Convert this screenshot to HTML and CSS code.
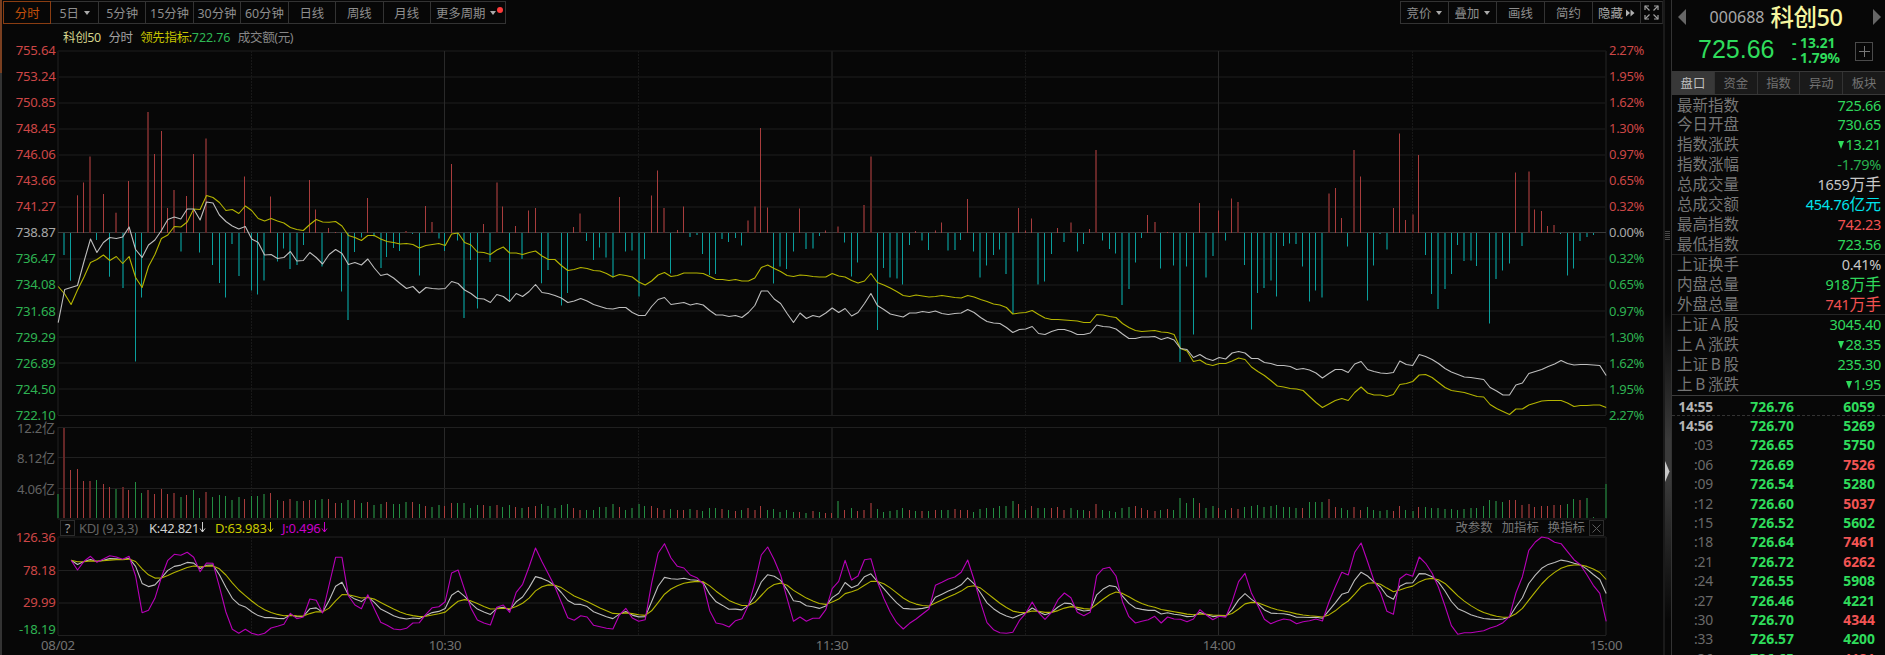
FILE: index.html
```html
<!DOCTYPE html>
<html lang="zh-CN">
<head>
  <meta charset="UTF-8" />
  <title>科创50 分时</title>
  <link rel="stylesheet" href="styles.css">
</head>
<body>
  <div id="wrapper">
    <div class="edge"></div>

    <div id="chart">
      <div class="toolbar">
        <div class="periods">
          <button class="active">分时</button>
          <button>5日<i class="caret"></i></button>
          <button>5分钟</button>
          <button>15分钟</button>
          <button>30分钟</button>
          <button>60分钟</button>
          <button>日线</button>
          <button>周线</button>
          <button>月线</button>
          <button class="more">更多周期<i class="caret"></i><i class="dot"></i></button>
        </div>
        <div class="tools">
          <button>竞价<i class="caret"></i></button>
          <button>叠加<i class="caret"></i></button>
          <button>画线</button>
          <button>简约</button>
          <button class="hide">隐藏<svg width="9" height="8" viewBox="0 0 9 8"><path d="M0 0.5L4 4L0 7.5ZM4.5 0.5L8.5 4L4.5 7.5Z"/></svg></button>
          <button class="full"><svg width="15" height="15" viewBox="0 0 15 15"><path d="M1 5V1H5M10 1H14V5M14 10V14H10M5 14H1V10" /><path d="M1 1L5.5 5.5M14 1L9.5 5.5M14 14L9.5 9.5M1 14L5.5 9.5" /></svg></button>
        </div>
      </div>

      <div class="legend">
        <span class="name">科创50</span>
        <span class="mode">分时</span>
        <span class="lead">领先指标:<b>722.76</b></span>
        <span class="amount">成交额(元)</span>
      </div>

      <svg id="price" width="1661" height="377" viewBox="2 44 1661 377"></svg>
      <svg id="volume" width="1661" height="98" viewBox="2 421 1661 98"></svg>

      <div class="kdj-bar">
        <span class="box">?</span>
        <span class="kdj-name">KDJ (9,3,3)</span>
        <span class="k">K:42.821<svg class="arrow" width="7" height="11" viewBox="0 0 7 11"><path d="M3.5 0V10M1 6.5L3.5 10L6 6.5"/></svg></span>
        <span class="d">D:63.983<svg class="arrow" width="7" height="11" viewBox="0 0 7 11"><path d="M3.5 0V10M1 6.5L3.5 10L6 6.5"/></svg></span>
        <span class="j">J:0.496<svg class="arrow" width="7" height="11" viewBox="0 0 7 11"><path d="M3.5 0V10M1 6.5L3.5 10L6 6.5"/></svg></span>
        <div class="kdj-links">
          <span>改参数</span>
          <span>加指标</span>
          <span>换指标</span>
          <span class="box"><svg width="9" height="9" viewBox="0 0 9 9"><path d="M0.5 0.5L8.5 8.5M8.5 0.5L0.5 8.5"/></svg></span>
        </div>
      </div>

      <svg id="kdj" width="1661" height="118" viewBox="2 537 1661 118"></svg>
    </div>

    <div id="splitter">
      <div class="grip"></div>
      <svg class="handle" width="5" height="21" viewBox="0 0 5 21"><path d="M0 0L4.5 10.5L0 21Z"/></svg>
    </div>

    <div id="side">
      <div class="quote">
        <div class="title">
          <svg width="8" height="16" viewBox="0 0 8 16"><path d="M8 0V16L0 8Z"/></svg>
          <div><span class="code">000688</span><span class="stock">科创50</span></div>
          <svg width="8" height="16" viewBox="0 0 8 16"><path d="M0 0V16L8 8Z"/></svg>
        </div>
        <div class="now">
          <span class="last">725.66</span>
          <div class="change"><span>- 13.21</span><span>- 1.79%</span></div>
          <span class="add"><svg width="11" height="11" viewBox="0 0 11 11"><path d="M5.5 0V11M0 5.5H11"/></svg></span>
        </div>
      </div>

      <div class="tabs">
        <span class="active">盘口</span>
        <span>资金</span>
        <span>指数</span>
        <span>异动</span>
        <span>板块</span>
      </div>

      <div class="info">
        <div class="row"><span>最新指数</span><b class="green">725.66</b></div>
        <div class="row"><span>今日开盘</span><b class="green">730.65</b></div>
        <div class="row"><span>指数涨跌</span><b class="green"><i class="down"></i>13.21</b></div>
        <div class="row"><span>指数涨幅</span><b class="green dark">-1.79%</b></div>
        <div class="row"><span>总成交量</span><b class="white">1659<em>万手</em></b></div>
        <div class="row"><span>总成交额</span><b class="cyan">454.76<em>亿元</em></b></div>
        <div class="row"><span>最高指数</span><b class="red">742.23</b></div>
        <div class="row line"><span>最低指数</span><b class="green">723.56</b></div>
        <div class="row"><span>上证换手</span><b class="white">0.41%</b></div>
        <div class="row"><span>内盘总量</span><b class="green">918<em>万手</em></b></div>
        <div class="row line"><span>外盘总量</span><b class="red">741<em>万手</em></b></div>
        <div class="row"><span>上证<u>A</u>股</span><b class="green">3045.40</b></div>
        <div class="row"><span>上<u>A</u>涨跌</span><b class="green"><i class="down"></i>28.35</b></div>
        <div class="row"><span>上证<u>B</u>股</span><b class="green">235.30</b></div>
        <div class="row"><span>上<u>B</u>涨跌</span><b class="green"><i class="down"></i>1.95</b></div>
      </div>

      <div class="ticks">
        <div class="tick minute dashed"><span>14:55</span><b>726.76</b><b>6059</b></div>
        <div class="tick minute"><span>14:56</span><b>726.70</b><b>5269</b></div>
        <div class="tick"><span>:03</span><b>726.65</b><b>5750</b></div>
        <div class="tick"><span>:06</span><b>726.69</b><b class="red">7526</b></div>
        <div class="tick"><span>:09</span><b>726.54</b><b>5280</b></div>
        <div class="tick"><span>:12</span><b>726.60</b><b class="red">5037</b></div>
        <div class="tick"><span>:15</span><b>726.52</b><b>5602</b></div>
        <div class="tick"><span>:18</span><b>726.64</b><b class="red">7461</b></div>
        <div class="tick"><span>:21</span><b>726.72</b><b class="red">6262</b></div>
        <div class="tick"><span>:24</span><b>726.55</b><b>5908</b></div>
        <div class="tick"><span>:27</span><b>726.46</b><b>4221</b></div>
        <div class="tick"><span>:30</span><b>726.70</b><b class="red">4344</b></div>
        <div class="tick"><span>:33</span><b>726.57</b><b>4200</b></div>
        <div class="tick"><span>:36</span><b>726.65</b><b class="red">4181</b></div>
      </div>
    </div>
  </div>

  <script src="chart.js"></script>
</body>
</html>
```

FILE: styles.css
```css
html, body {
  margin: 0;
  padding: 0;
  height: 100%;
  background: #070707;
  color: #8a8a8a;
  font-family: 'Noto Sans', 'Noto Sans CJK SC', sans-serif;
  font-size: 12.5px;
  overflow: hidden;
}

b, i, em, u {
  font-weight: normal;
  font-style: normal;
  text-decoration: none;
}

#wrapper {
  display: flex;
  height: 100vh;
}

.edge {
  width: 2px;
  flex-shrink: 0;
  background: linear-gradient(#7a3f20 73px, #333 73px);
}

#chart {
  width: 1661px;
  flex-shrink: 0;
  display: flex;
  flex-direction: column;
}

#chart > svg {
  display: block;
  flex-shrink: 0;
  overflow: visible;
}

/* toolbar */

.toolbar {
  height: 25px;
  box-sizing: border-box;
  padding: 1px 0 0 1px;
  display: flex;
  justify-content: space-between;
}

.periods, .tools {
  display: flex;
}

.toolbar button {
  width: 48.45px;
  height: 23px;
  margin: 0 -1px 0 0;
  padding: 0;
  box-sizing: border-box;
  display: flex;
  align-items: center;
  justify-content: center;
  border: 1px solid #333;
  background: none;
  color: #8e8e8e;
  font-family: inherit;
  font-size: 12.4px;
  white-space: nowrap;
}

.periods button.active {
  color: #c4500a;
  border-color: #8a3d12;
  position: relative;
}

.periods button.more {
  width: 76.5px;
  position: relative;
  padding-right: 4px;
}

.tools button {
  width: 49px;
}

.tools button.hide {
  color: #a8a8a8;
}

.tools button.full {
  width: 23px;
  margin-right: 0;
  border-right-color: #222;
}

.hide svg {
  margin-left: 3px;
  fill: #b0b0b0;
}

.full svg {
  fill: none;
  stroke: #a0a0a0;
  stroke-width: 1.2;
}

.caret {
  margin-left: 5px;
  border: 3px solid transparent;
  border-top: 4px solid #aaa;
  border-bottom: 0;
}

.dot {
  position: absolute;
  top: 5px;
  right: 2px;
  width: 6px;
  height: 6px;
  border-radius: 50%;
  background: #ff3b3b;
}

.legend {
  height: 19px;
  padding: 6px 0 0 61px;
  box-sizing: border-box;
  display: flex;
  align-items: center;
  gap: 7.5px;
  line-height: 18px;
  font-size: 12.5px;
  letter-spacing: -0.35px;
}

.name { color: #d4d48c; }
.mode { color: #a0a0a0; }
.lead { color: #c4c400; }
.lead b { color: #2eb854; letter-spacing: -0.1px; }
.amount { color: #868686; }

/* chart drawing */

#chart text {
  font-size: 13.2px;
  letter-spacing: -0.25px;
}

#chart .pct {
  font-size: 13px;
  letter-spacing: -0.3px;
}

.t-red { fill: #cc4646; }
.t-green { fill: #2eb252; }
.t-white { fill: #a8a8a8; }
.t-gray { fill: #626262; }
.t-time { fill: #727272; }

.up { fill: #a83c3c; }
.up.soft { fill: #642626; }
.down-bar { fill: #0a9e9c; }
.down-bar.soft { fill: #07605f; }
.vol-down { fill: #238c42; }
.vol-down.soft { fill: #1a562a; }

.curve {
  fill: none;
  stroke-width: 1.1;
  stroke-linejoin: round;
}

.c-white { stroke: #bebebe; }
.c-yellow { stroke: #b4b400; }
.c-purple { stroke: #b800b8; }

/* kdj header */

.kdj-bar {
  height: 18px;
  box-sizing: border-box;
  padding: 0 59px 0 58px;
  display: flex;
  align-items: center;
  line-height: 18px;
  font-size: 13px;
  letter-spacing: -0.25px;
}

.box {
  width: 15px;
  height: 16px;
  box-sizing: border-box;
  display: flex;
  align-items: center;
  justify-content: center;
  border: 1px solid #2c2c2c;
  color: #9a9a9a;
}

.kdj-bar svg {
  fill: none;
  stroke: currentColor;
  stroke-width: 1;
}

.kdj-name { margin-left: 4px; color: #626262; width: 70px; }
.k { color: #d0d0d0; width: 66px; }
.d { color: #c8c800; width: 67px; }
.j { color: #c800c8; }

.kdj-links {
  margin-left: auto;
  display: flex;
  align-items: center;
  color: #767676;
  font-size: 12.4px;
  gap: 9px;
  letter-spacing: 0;
}

.kdj-links .box {
  margin-left: -5px;
  color: #5a5a5a;
}

/* splitter */

#splitter {
  width: 8px;
  flex-shrink: 0;
  box-sizing: border-box;
  position: relative;
  border-left: 2px solid #1a1a1a;
  background: linear-gradient(#070707 310px, #3a3a3a 440px, #3a3a3a 480px, #070707 620px);
}

.grip {
  position: absolute;
  top: 231px;
  left: 0;
  width: 5px;
  height: 9px;
  background: repeating-linear-gradient(#484848 0 1px, #070707 1px 2px);
}

.handle {
  position: absolute;
  top: 461px;
  left: 0;
  fill: #c8c8c8;
}

/* right side panel */

#side {
  flex: 1;
  min-width: 0;
  border-left: 1px solid #333;
}

.quote {
  height: 71px;
}

.title {
  height: 34px;
  padding: 0 4px 0 6px;
  display: flex;
  align-items: center;
  justify-content: space-between;
  fill: #666;
}

.title div {
  display: flex;
  align-items: center;
  padding-right: 7px;
}

.code {
  color: #a8a8a8;
  font-size: 16px;
}

.stock {
  margin-left: 6px;
  color: #f6f6a0;
  font-size: 23.5px;
  font-weight: 500;
  line-height: 34px;
  letter-spacing: -0.5px;
}

.now {
  display: flex;
  align-items: center;
  height: 31px;
  padding-left: 26px;
  color: #2fdc5c;
}

.last {
  width: 94px;
  font: 25px/31px 'Liberation Sans', sans-serif;
  white-space: nowrap;
}

.change {
  display: flex;
  flex-direction: column;
  width: 63px;
  font-size: 13.8px;
  font-weight: bold;
  line-height: 15px;
  white-space: pre;
}

.add {
  width: 18px;
  height: 19px;
  margin-top: 4px;
  box-sizing: border-box;
  border: 1px solid #4a4a4a;
  display: flex;
  align-items: center;
  justify-content: center;
}

.add svg {
  stroke: #777;
  stroke-width: 1;
}

.tabs {
  display: flex;
  height: 24px;
  box-sizing: border-box;
  border-top: 1px solid #383838;
  border-bottom: 1px solid #383838;
  background: #1a1a1a;
}

.tabs span {
  flex: 1;
  line-height: 23px;
  text-align: center;
  font-size: 12.3px;
  color: #727272;
  border-left: 1px solid #333;
}

.tabs .active {
  background: #383838;
  color: #c0c0c0;
  border-left: 0;
}

.info {
  border-bottom: 1px solid #3c3c3c;
  padding-top: 0.5px;
}

.row {
  height: 19.98px;
  box-sizing: border-box;
  padding: 0 4px 0 5px;
  display: flex;
  justify-content: space-between;
  line-height: 19px;
}

.row.line {
  border-bottom: 1px solid #262626;
}

.row span {
  font-size: 15.5px;
  color: #767676;
}

.row u {
  display: inline-block;
  width: 15.5px;
  text-align: center;
}

.row b {
  font-size: 14.5px;
  line-height: 18px;
  letter-spacing: -0.3px;
}

.row em {
  font-size: 15.8px;
  letter-spacing: 0;
}

.down {
  display: inline-block;
  margin-right: 1px;
  vertical-align: 1px;
  border: 3.5px solid transparent;
  border-top: 8px solid #2fdc5c;
  border-bottom: 0;
}

.green { color: #2fd85c; }
.green.dark { color: #28b04e; }
.white { color: #c8c8c8; }
.cyan { color: #00e4ec; }
.red { color: #f25252; }

.ticks {
  padding-top: 0.5px;
}

.tick {
  height: 19.42px;
  box-sizing: border-box;
  display: flex;
  line-height: 19px;
  font-size: 13.9px;
  padding: 0 10px 0 5px;
}

.tick.dashed {
  border-bottom: 1px dashed #333;
}

.tick span {
  width: 36px;
  text-align: right;
  color: #6a6a6a;
  letter-spacing: -0.2px;
}

.tick.minute span {
  color: #b4b4b4;
  font-weight: bold;
}

.tick b {
  width: 81px;
  text-align: right;
  font-weight: bold;
  color: #2fdc5c;
}

.tick b:last-child {
  margin-left: auto;
}

.tick b.red {
  color: #f25454;
}
```

FILE: chart.js
```js
const LEFT = 58, RIGHT = 1606, STEP = 1548 / 240;
const ZERO = 233;

// end of each lead-indicator bar, one per minute
const lead = [
  233,255,280.7,195.3,182.5,156.5,240,194,276.7,212.7,288,181,361.5,297.5,112,154,131,208,190,251.5,
  196,154,252.5,138.5,265,283,297.5,244,276,176.5,290.5,294.5,280.5,196.5,261.5,248.5,269,265,245,180,
  209.5,266.5,228,232,291.5,320,252,237.5,198,236.5,268,257,248,251,231,234,275.5,206,222,238.5,
  251,164,240.5,318,260,308.5,224,262,182.5,206.5,301,226,259,210.5,208,283.3,270,233,305.5,293,
  227,213.5,241,260,247.5,257.5,277.5,197,251.5,250.5,296.5,259,195.5,170.5,208,273.5,230,206.5,237,235,
  254,275,274,239,242,238,245.5,220.5,206.5,128,207.5,283.5,266.5,269,251.5,208.5,249,248.5,236,230.5,
  233,226.5,242.5,276.5,262.5,205,156.5,330,268,277.5,278.5,284.5,245,231,240.5,250,230.5,222.5,250.5,250,
  240,199,251.5,277.5,265.5,255,249.5,274,314,208,230.5,218.5,284.5,281.5,254,228,242,222.5,251.5,244,
  229,150,240.5,249,253.5,305,289,262.5,238,215,222,268.5,232,265.5,362,266.5,334.5,203,277.5,256,
  210.5,240.5,198.5,202,265,329.5,293,288,280.5,296.5,246,243.5,244,266.5,301.5,290.5,297.5,193.5,188,218,
  246.5,150,176.5,300.5,265.5,234,249.5,208,133.5,220,214.5,155,255,294,309,289,274,245,261,260.5,
  266,233,323.5,279,270.5,263.5,172.5,246,171.5,209.5,211,226,225,234,275.5,268.5,241,237,235,233
];

const price = [
  322.7,289.5,287.5,285.5,261.5,239,252.5,242.5,237.5,238.5,237,227,249.5,257.5,245,240,230.5,219.5,217,219,
  209,209,220,202,203,215,221.5,226,229,226.5,239,242.5,255,254.5,258.5,257.5,251.5,261,260.5,252.5,
  257.5,264,254.5,249.5,253.5,264.5,262.5,265,259,268,275.5,274,278,283.5,288.5,286.5,293,287.5,288.5,289,
  288.5,281.5,283.5,290,293.5,298.5,299,302.5,294.5,296.5,301.5,293.5,296.5,291.5,284.5,292.5,293.5,295.5,298,302.5,
  301,298.5,301,304.5,306.5,308.5,309,307.5,307.5,312.5,315.5,315.5,306.5,299.5,297.5,304.5,303.5,302.5,305,303.5,
  305,310.5,315,315,316.5,315.5,317.5,312.5,305.5,291,291,299,303.5,313.5,322.5,313,318.5,315.5,317,313,
  308,312.5,308.5,316,312.5,303.5,293.5,305.5,309.5,314,315.5,317,313,313,311.5,312.5,311,313.5,314.5,313.5,
  313,309.5,312.5,317.5,321.5,323,323.5,327.5,332.5,329.5,329,326.5,333.5,334.5,331.5,329.5,329.5,331.5,334.5,334.5,
  333,325,326.5,327,329,334,338.5,338.5,337,337,336.5,339.5,337.5,340,348.5,349.5,357.5,354.5,358.5,360.5,
  357.5,359,353,351.5,353,358.5,358.5,362.5,363.5,365.5,365.5,366.5,369.5,368.5,370,373,378,373.5,369.5,369.5,
  372.5,364,361.5,369.5,371.5,373,373.5,372.5,361,364.5,365.5,354.5,356.5,359.5,363.5,368.5,372,374.5,377,377.5,
  378.5,379.5,387.5,391,395,395,385,383,373.5,371.5,369.5,366.5,364,360.5,363.5,365,364.5,364.5,365,365.5,375.5
];

const leadLine = [
  286.5,294,304.5,290,277,262.5,259.5,255,260.5,256.5,263.5,256.5,277.5,287.5,266.5,254.5,238.5,235,226.5,227,
  222,209,209.5,195.5,197.5,202.5,210.5,209.5,213.5,206,210.5,218.5,221,218.5,221,223,227.5,229.5,230.5,224.5,
  219.5,222,222.3,221.5,226,235.5,237.5,240.5,235.5,235.5,239,241.5,242.5,244,243.5,244.5,248,245.5,244.5,243.5,
  245.5,234,233,242.5,245,252,252.5,254.5,250,247,253,253,254.5,252.5,251,256,259.5,259.5,265.5,270.5,
  269.5,267.5,268.5,270.5,271,273.5,277,274.5,275.5,277,282,285,281,275,272.5,276.5,275.5,273,273,273,
  273.5,276.5,279.5,279.5,280.5,279.5,281,281,278,267.5,265,268.5,271.5,275.5,276.5,275,275.5,276.5,277,277,
  273.5,276,277,280.5,283,281,273.5,282.5,285,288,291.5,295.5,296.5,295,296,297,296.5,295.5,296.5,297.5,
  298,295.5,297,299.5,301.5,304,305,307.5,314,313,312.5,310.5,314.5,318,319.5,319.5,320,320.5,321,322.5,
  322.5,314.5,315,316.5,317.5,323.5,327.5,330.5,331.5,331,330.5,332,332.5,334.5,348.5,351,361.5,360,364,365.5,
  363.5,363.5,361,358,359.5,367,371.5,375.5,380.5,386,387,388.5,389,390.5,396.5,402.5,407.5,404,400.5,398.5,
  400.5,392.5,387,393,395,395,396.5,394.5,384.5,383.5,381.5,375,374.5,377.5,382.5,387.5,390.5,391.5,392.5,394.5,
  396.5,397,404.5,408.5,411.5,414.5,409,409,405,403,401,400.5,400.5,400.5,403,406.5,405.5,405.5,405,405,407.5
];

// volume bar heights, negative = falling minute
const vol = [
  -24,90,48,49,37,37,-38,34,31,-29,31,28,-36,-25,28,24,29,24,25,-21,
  23,-28,-20,26,-21,-23,-22,-18,-21,19,-22,-22,-24,25,-18,17,19,-17,17,18,
  -18,-19,19,15,-15,-18,18,-15,16,-13,-14,16,-14,-14,-16,16,-14,12,-11,-13,
  12,15,-15,-15,-10,-13,13,-12,13,-11,-13,11,-10,11,12,-14,-12,-10,-13,-14,
  10,8,-8,-8,-11,-11,-14,11,-8,-10,-14,-12,12,10,8,-9,8,8,-9,8,
  -7,-10,-10,9,-8,7,-8,10,8,12,-8,-9,-6,-8,-6,6,-5,7,-6,5,
  5,-17,8,-10,7,8,15,-9,-6,-7,-8,-10,8,-7,7,-7,8,-8,-8,9,
  8,8,-6,-9,-10,-10,-12,-12,-17,14,-8,12,-10,-10,10,11,8,-10,-8,-8,
  7,14,-8,-7,-6,-10,-11,12,10,8,7,-8,9,-8,-20,-15,-20,15,-10,-12,
  10,-8,10,9,-11,-12,-13,-11,-12,-13,-11,-11,-10,10,-16,-16,-16,19,11,-10,
  -8,11,8,-11,-8,-7,-8,7,12,-8,-7,11,-11,-10,-10,-9,-9,-8,-9,-10,
  -10,-12,-18,-17,-16,18,18,13,14,11,12,12,13,13,-14,-19,18,-20,-1,0,-34
];

// J line starts at the third minute, thirds of a pixel below y = 420
const jRaw = [
  421,450,424,409,427,417,407,411,418,409,468,578,571,535,472,421,403,406,
  397,412,455,429,430,500,576,628,640,628,640,645,640,624,619,613,580,596,591,537,
  541,579,495,412,412,527,555,566,524,566,607,616,627,629,625,609,608,583,563,560,
  545,459,450,509,565,600,609,615,562,555,577,517,493,440,384,425,462,500,547,593,
  601,587,591,616,620,625,627,585,565,594,604,599,490,400,371,414,439,444,465,473,
  492,572,609,613,621,602,596,556,490,405,381,419,465,535,604,591,604,595,595,569,
  506,484,421,480,468,419,416,485,535,577,608,627,610,597,582,567,496,487,477,471,
  457,420,480,548,608,629,638,640,637,602,580,546,578,598,577,539,519,533,577,587,
  577,467,446,442,468,545,590,609,604,599,589,609,591,597,598,605,597,569,585,599,
  589,592,545,485,460,520,557,598,611,603,597,600,611,605,602,597,603,547,500,457,
  465,397,369,425,482,518,574,583,476,462,469,411,430,460,502,558,617,643,638,638,
  635,632,624,618,608,590,519,470,391,366,351,355,367,371,395,419,434,464,496,520,604
];

const xAt = i => LEFT + i * STEP;

function isSoft(i) {
  const m = (((i - 0.7) % 4.45) + 4.45) % 4.45;
  return Math.min(m, 4.45 - m) < 0.75;
}

function rect(x, y, w, h, cls, fill) {
  return `<rect x="${x}" y="${y}" width="${w}" height="${h}"` +
    (cls ? ` class="${cls}"` : '') + (fill ? ` fill="${fill}"` : '') + '/>';
}

function bar(i, y, h, cls) {
  const soft = isSoft(i);
  const x = soft ? Math.round(xAt(i)) - 1 : Math.floor(xAt(i) - 0.1);
  return rect(x, y, soft ? 2 : 1, h, cls + (soft ? ' soft' : ''));
}

function text(x, y, anchor, cls, str) {
  return `<text x="${x}" y="${y + 4.7}" text-anchor="${anchor}" class="${cls}">${str}</text>`;
}

function curve(points, start, cls) {
  const pts = points.map((y, i) => (xAt(i + start) + 0.2).toFixed(1) + ',' + y.toFixed(1)).join(' ');
  return `<polyline points="${pts}" class="curve ${cls}"/>`;
}

function verticals(top, bottom) {
  let s = rect(57, top, 2, bottom - top, '', '#141414') + rect(1605, top, 2, bottom - top, '', '#161616');
  [251, 638, 1025, 1412].forEach(x => {
    s += `<path d="M${x + 0.5} ${top}V${bottom}" stroke="#181818" stroke-dasharray="2 1"/>`;
  });
  s += rect(444, top, 1, bottom - top, '', '#292929');
  s += rect(831, top, 2, bottom - top, '', '#191919');
  s += rect(1218, top, 1, bottom - top, '', '#292929');
  return s;
}

function drawPrice() {
  const left = ['755.64', '753.24', '750.85', '748.45', '746.06', '743.66', '741.27', '738.87',
    '736.47', '734.08', '731.68', '729.29', '726.89', '724.50', '722.10'];
  const right = ['2.27%', '1.95%', '1.62%', '1.30%', '0.97%', '0.65%', '0.32%', '0.00%'];
  let s = '';
  for (let i = 0; i < 15; i++) {
    const y = 51 + i * 26.02;
    const cls = i < 7 ? 't-red' : i === 7 ? 't-white' : 't-green';
    if (i === 14) s += rect(LEFT, 415, RIGHT - LEFT, 1, '', '#202020');
    else if (i !== 7) s += rect(LEFT, Math.round(y) - 1, RIGHT - LEFT, 2, '', '#121212');
    s += text(55.5, y - 0.4, 'end', cls, left[i]);
    s += text(1609, y - 0.4, 'start', cls + ' pct', right[i < 8 ? i : 14 - i]);
  }
  s += verticals(51, 415);
  s += rect(LEFT, 232, RIGHT - LEFT, 1, '', '#3a3a3a');
  lead.forEach((y, i) => {
    if (y < ZERO) s += bar(i, y, ZERO - y, 'up');
    if (y > ZERO) s += bar(i, ZERO, y - ZERO, 'down-bar');
  });
  s += curve(leadLine, 0, 'c-yellow') + curve(price, 0, 'c-white');
  document.getElementById('price').innerHTML = s;
}

function drawVolume() {
  let s = verticals(427, 519);
  [427, 457, 488].forEach(y => s += rect(LEFT, y, RIGHT - LEFT, 1, '', '#202020'));
  s += rect(LEFT, 518, RIGHT - LEFT, 2, '', '#141414');
  s += text(55, 428.5, 'end', 't-gray', '12.2亿');
  s += text(55, 458.5, 'end', 't-gray', '8.12亿');
  s += text(55, 489, 'end', 't-gray', '4.06亿');
  vol.forEach((v, i) => {
    if (i === 240) s += rect(1605, 484, 2, 34, 'vol-down soft');
    else if (v) s += bar(i, 518 - Math.abs(v), Math.abs(v), v > 0 ? 'up' : 'vol-down');
  });
  document.getElementById('volume').innerHTML = s;
}

function drawKdj() {
  // J = 3K - 2D and D = (2D' + K) / 3, so K and D follow from J
  const j = jRaw.map(v => 420 + v / 3);
  const k = [], d = [];
  let prev = j[0];
  j.forEach(v => {
    prev = (6 * prev + v) / 7;
    d.push(prev);
    k.push((v + 2 * prev) / 3);
  });

  let s = verticals(537, 635);
  s += rect(LEFT, 536, RIGHT - LEFT, 2, '', '#141414');
  s += rect(LEFT, 570, RIGHT - LEFT, 1, '', '#202020');
  s += rect(LEFT, 602, RIGHT - LEFT, 2, '', '#141414');
  s += rect(LEFT, 635, RIGHT - LEFT, 1, '', '#202020');
  s += text(55.5, 537, 'end', 't-red', '126.36');
  s += text(55.5, 570, 'end', 't-red', '78.18');
  s += text(55.5, 602.7, 'end', 't-red', '29.99');
  s += text(55.5, 629.5, 'end', 't-green', '-18.19');
  s += curve(k, 2, 'c-white') + curve(d, 2, 'c-yellow') + curve(j, 2, 'c-purple');
  ['08/02', '10:30', '11:30', '14:00', '15:00'].forEach((t, i) => {
    s += text(xAt(i * 60), 645.5, 'middle', 't-time', t);
  });
  document.getElementById('kdj').innerHTML = s;
}

drawPrice();
drawVolume();
drawKdj();
```
